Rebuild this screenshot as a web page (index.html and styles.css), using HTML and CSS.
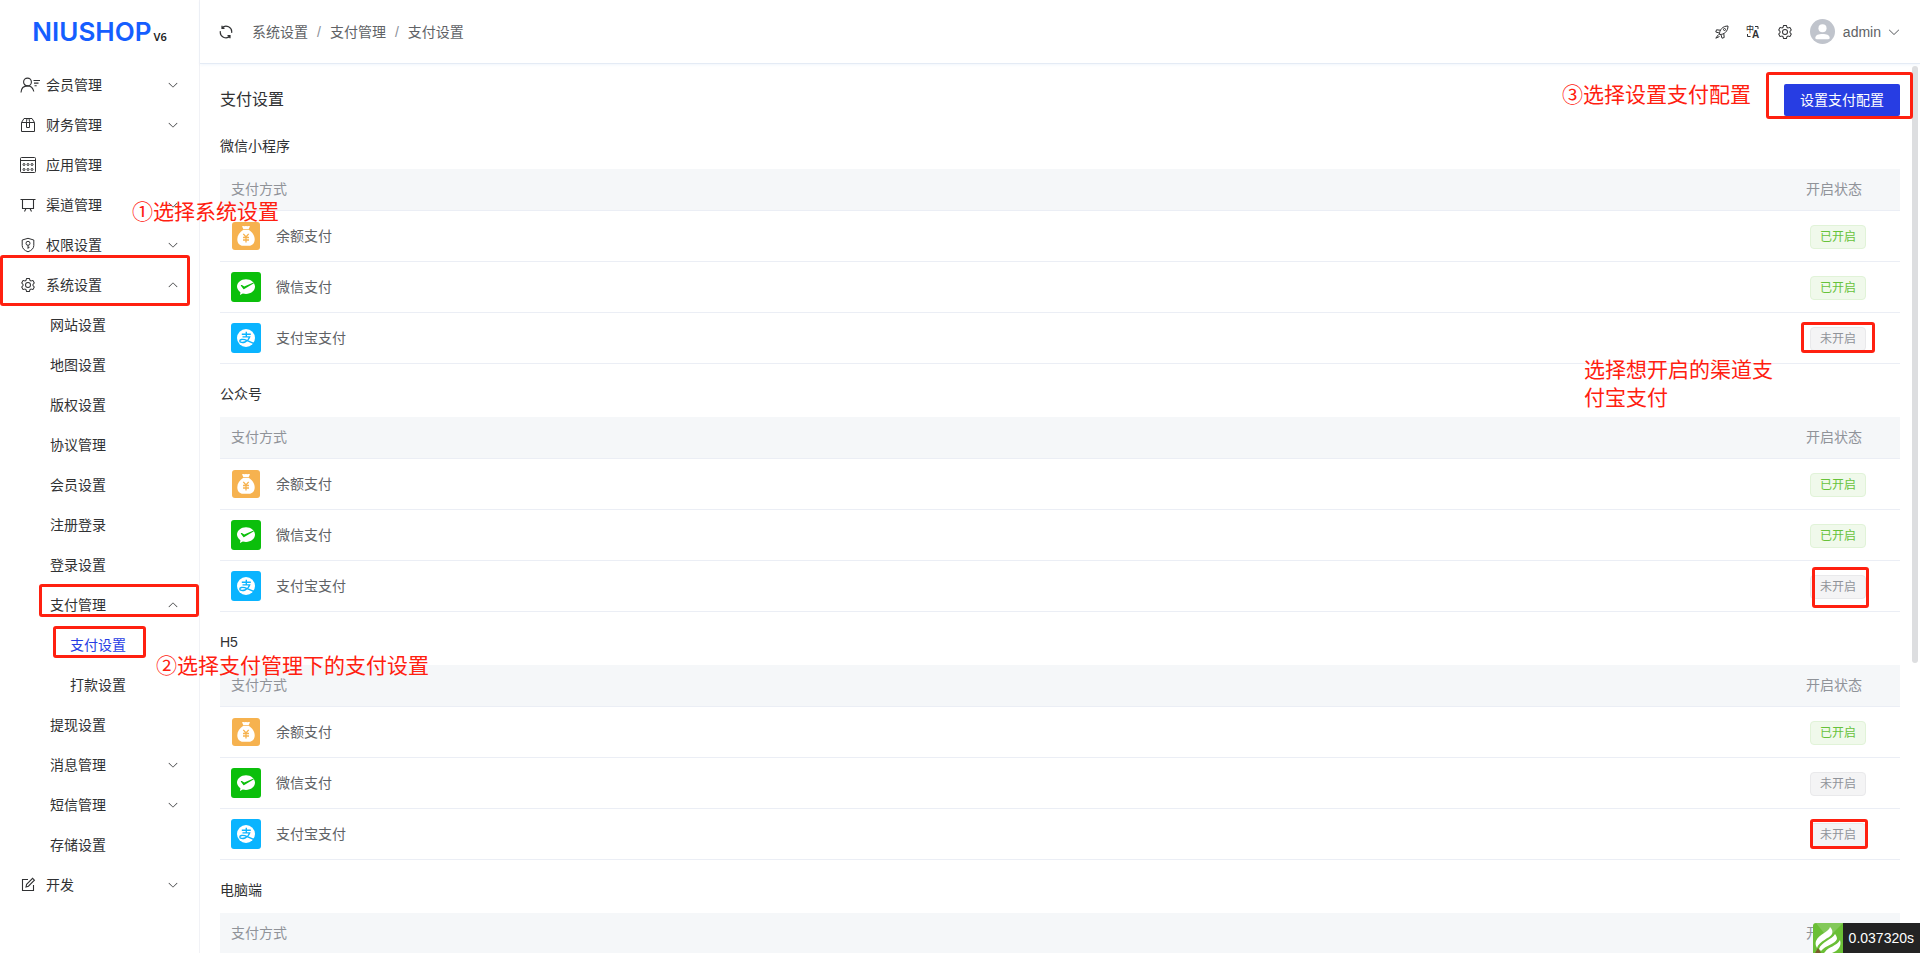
FILE: index.html
```html
<!DOCTYPE html>
<html lang="zh-CN">
<head>
    <meta charset="UTF-8">
    <meta name="viewport" content="width=device-width, initial-scale=1.0">
    <title>支付设置</title>
    <link rel="stylesheet" href="styles.css">
</head>
<body>

<!-- Shared icons -->
<svg class="sprite" aria-hidden="true">
    <symbol id="arrow" viewBox="0 0 1024 1024">
        <path fill="currentColor" d="M831.872 340.864 512 652.672 192.128 340.864a30.592 30.592 0 0 0-42.752 0 29.12 29.12 0 0 0 0 41.6L489.664 714.24a32 32 0 0 0 44.672 0l340.288-331.712a29.12 29.12 0 0 0 0-41.728 30.592 30.592 0 0 0-42.752 0z"/>
    </symbol>
    <symbol id="gear" viewBox="0 0 1024 1024">
        <path fill="currentColor" d="M600.704 64a32 32 0 0 1 30.464 22.208l35.2 109.376c14.784 7.232 28.928 15.36 42.432 24.512l112.384-24.192a32 32 0 0 1 34.432 15.36L944.32 364.8a32 32 0 0 1-4.032 37.504l-77.12 85.12a357.12 357.12 0 0 1 0 49.024l77.12 85.248a32 32 0 0 1 4.032 37.504l-88.704 153.6a32 32 0 0 1-34.432 15.296L708.8 803.904c-13.44 9.088-27.648 17.28-42.368 24.512l-35.264 109.376A32 32 0 0 1 600.704 960H423.296a32 32 0 0 1-30.464-22.208L357.696 828.48a351.616 351.616 0 0 1-42.56-24.64l-112.32 24.256a32 32 0 0 1-34.432-15.36L79.68 659.2a32 32 0 0 1 4.032-37.504l77.12-85.248a357.12 357.12 0 0 1 0-48.896l-77.12-85.248A32 32 0 0 1 79.68 364.8l88.704-153.6a32 32 0 0 1 34.432-15.296l112.32 24.256c13.568-9.152 27.776-17.408 42.56-24.64l35.2-109.312A32 32 0 0 1 423.232 64H600.64zm-23.424 64H446.72l-36.352 113.088-24.512 11.968a294.113 294.113 0 0 0-34.816 20.096l-22.656 15.36-116.224-25.088-65.28 113.152 79.68 88.192-1.92 27.136a293.12 293.12 0 0 0 0 40.192l1.92 27.136-79.808 88.192 65.344 113.152 116.224-25.024 22.656 15.296a294.113 294.113 0 0 0 34.816 20.096l24.512 11.968L446.72 896h130.688l36.48-113.152 24.448-11.904a288.282 288.282 0 0 0 34.752-20.096l22.592-15.296 116.288 25.024 65.28-113.152-79.744-88.192 1.92-27.136a293.12 293.12 0 0 0 0-40.256l-1.92-27.136 79.808-88.128-65.344-113.152-116.288 24.96-22.592-15.232a287.616 287.616 0 0 0-34.752-20.096l-24.448-11.904L577.344 128zM512 320a192 192 0 1 1 0 384 192 192 0 0 1 0-384zm0 64a128 128 0 1 0 0 256 128 128 0 0 0 0-256z"/>
    </symbol>
    <symbol id="balance" viewBox="0 0 30 30">
        <rect x="1" y="1" width="28" height="28" rx="3" fill="#f6b24f"/>
        <path fill="#fff" d="M11 5.200q1.300-.6 2.600 0 1.300-.6 2.800 0 1.400-.6 2.600 0l-1.300 2.800h-5.400zM12.300 8.800h5.400c3.600 2.300 6 5.800 6 9.400 0 4.200-2.500 6.500-5.700 6.500h-6c-3.200 0-5.700-2.300-5.700-6.500 0-3.600 2.400-7.100 6-9.400z"/>
        <path fill="none" stroke="#f6b24f" stroke-width="1.300" d="m12.300 12.800 2.700 3.200 2.700-3.200M12 16.500h6M12 19h6M15 16v5.500"/>
    </symbol>
    <symbol id="wechat" viewBox="0 0 30 30">
        <rect width="30" height="30" rx="3" fill="#0bbf0b"/>
        <path fill="#fff" d="M15 7.200c5 0 9 3.300 9 7.400s-4 7.400-9 7.400c-1.100 0-2.200-.2-3.200-.5L9 23l.4-2.800C7.300 18.800 6 16.800 6 14.600c0-4.100 4-7.400 9-7.400z"/>
        <path fill="#0bbf0b" d="M10 13c.3-.2.600-.1.900.1l2.300 1.500 9.300-4 .4.600-9.600 5.700c-.6.400-1 .3-1.300-.3L9.900 13.700c-.1-.3-.1-.5.1-.7z"/>
    </symbol>
    <symbol id="alipay" viewBox="0 0 30 30">
        <rect width="30" height="30" rx="3" fill="#0ab4ff"/>
        <circle cx="15" cy="15" r="9" fill="#fff"/>
        <path fill="none" stroke="#0ab4ff" stroke-width="1.400" d="M10.800 11.300h9M15.300 8.800v5M11.500 13.900h7.200c-.7 2.200-2.500 4.200-4.700 5.100-2.400 1-5.200.5-5.200-1.100 0-1.400 2.600-2 5-1.200 3 1 5.500 2.500 9.200 3.800"/>
    </symbol>
</svg>

<aside class="sidebar">
    <div class="logo"><span class="logo-name">NIUSHOP</span><span class="logo-version">V6</span></div>
    <nav>
        <ul class="menu">
            <li>
                <a href="#">
                    <svg class="menu-icon wide" viewBox="0 0 20 16"><g fill="none" stroke="currentColor" stroke-width="1.100"><circle cx="7.500" cy="5" r="3.900"/><path d="M1 15.500c.2-3.600 2.400-6.600 6.500-6.600 3.300 0 5.600 2.400 6.300 5.600M13.500 3.500H20M14 6.100h4.500M14.500 8.700h2.200"/></g></svg>
                    <span>会员管理</span>
                    <svg class="arrow"><use href="#arrow"/></svg>
                </a>
            </li>
            <li>
                <a href="#">
                    <svg class="menu-icon" viewBox="0 0 16 16"><g fill="none" stroke="currentColor"><path d="M1.500 5.500v9h13v-9zM1.500 5.500l2.500-4h8l2.500 4"/><path d="M6.500 10.500v-6l.5-3h2l.5 3v6z"/></g></svg>
                    <span>财务管理</span>
                    <svg class="arrow"><use href="#arrow"/></svg>
                </a>
            </li>
            <li>
                <a href="#">
                    <svg class="menu-icon" viewBox="0 0 16 16"><g fill="none" stroke="currentColor"><rect x=".5" y=".5" width="15" height="15" rx="1"/><path d="M.5 3.500h15"/><circle cx="4" cy="7.500" r="1"/><circle cx="8" cy="7.500" r="1"/><circle cx="12" cy="7.500" r="1"/><circle cx="4" cy="12.500" r="1"/><circle cx="8" cy="12.500" r="1"/><circle cx="12" cy="12.500" r="1"/></g></svg>
                    <span>应用管理</span>
                </a>
            </li>
            <li>
                <a href="#">
                    <svg class="menu-icon" viewBox="0 0 16 16"><path fill="none" stroke="currentColor" stroke-width="1.100" d="M.5 2.500h15M2.500 2.500v9h11v-9M6 11.500l-1.500 3M10 11.500l1.500 3"/></svg>
                    <span>渠道管理</span>
                    <svg class="arrow"><use href="#arrow"/></svg>
                </a>
            </li>
            <li>
                <a href="#">
                    <svg class="menu-icon" viewBox="0 0 16 16"><g fill="none" stroke="currentColor"><path d="M8 1.300 13.800 3v5.500c0 3-2.300 5-5.800 6.300-3.500-1.300-5.800-3.300-5.800-6.300V3z"/><circle cx="8" cy="6.300" r="2"/><path d="M8 8.300v3.500M8 10.300h1.500"/></g></svg>
                    <span>权限设置</span>
                    <svg class="arrow"><use href="#arrow"/></svg>
                </a>
            </li>
            <li>
                <a href="#">
                    <svg class="menu-icon"><use href="#gear"/></svg>
                    <span>系统设置</span>
                    <svg class="arrow up"><use href="#arrow"/></svg>
                </a>
                <ul class="submenu">
                    <li><a href="#">网站设置</a></li>
                    <li><a href="#">地图设置</a></li>
                    <li><a href="#">版权设置</a></li>
                    <li><a href="#">协议管理</a></li>
                    <li><a href="#">会员设置</a></li>
                    <li><a href="#">注册登录</a></li>
                    <li><a href="#">登录设置</a></li>
                    <li>
                        <a href="#">支付管理<svg class="arrow up"><use href="#arrow"/></svg></a>
                        <ul class="submenu-inner">
                            <li><a href="#" class="active">支付设置</a></li>
                            <li><a href="#">打款设置</a></li>
                        </ul>
                    </li>
                    <li><a href="#">提现设置</a></li>
                    <li><a href="#">消息管理<svg class="arrow"><use href="#arrow"/></svg></a></li>
                    <li><a href="#">短信管理<svg class="arrow"><use href="#arrow"/></svg></a></li>
                    <li><a href="#">存储设置</a></li>
                </ul>
            </li>
            <li>
                <a href="#">
                    <svg class="menu-icon" viewBox="0 0 16 16"><g fill="none" stroke="currentColor" stroke-width="1.100"><path d="M8 2.500H2.500v11h11V8"/><path d="m6 10 .6-2.600 6-6 1.800 1.800-6 6z"/></g></svg>
                    <span>开发</span>
                    <svg class="arrow"><use href="#arrow"/></svg>
                </a>
            </li>
        </ul>
    </nav>
</aside>

<div class="page">
    <header class="header">
        <button class="icon-btn refresh" aria-label="刷新">
            <svg viewBox="0 0 14 14"><path fill="none" stroke="currentColor" stroke-width="1.200" d="M3 3A5.600 5.600 0 0 1 12.600 7.800M11 11A5.600 5.600 0 0 1 1.400 6.200M3 .8v2.500h2.500M11 13.200v-2.500H8.500"/></svg>
        </button>
        <nav class="breadcrumb">
            <a href="#">系统设置</a><span>/</span><a href="#">支付管理</a><span>/</span><a href="#">支付设置</a>
        </nav>
        <div class="header-right">
            <button class="icon-btn" aria-label="首页">
                <svg viewBox="0 0 14 14"><g fill="none" stroke="currentColor"><path d="M4.500 9.500C4.300 5 7.500 1 13 1c0 5.500-4 8.700-8.500 8.500zM5.200 5.200 1.500 4.800.8 7l3.400 1M8.800 8.800l.4 3.700-2.200.7-1-3.400M3.500 9.500.8 13.200l3.700-1.700"/><circle cx="9.500" cy="4.500" r="1"/></g></svg>
            </button>
            <button class="icon-btn" aria-label="语言">
                <svg viewBox="0 0 14 14"><g fill="currentColor"><text x="0" y="7" class="lang-zh">中</text><text x="6" y="13" class="lang-en">A</text></g><path fill="none" stroke="currentColor" d="M9 1.500h3v2.500M1.500 9v2.500h3"/></svg>
            </button>
            <button class="icon-btn" aria-label="设置">
                <svg class="gear"><use href="#gear"/></svg>
            </button>
            <button class="user">
                <svg class="avatar" viewBox="0 0 26 26"><circle cx="13" cy="13" r="13" fill="#c0c4cc"/><circle cx="13" cy="9.700" r="4.200" fill="#fff"/><path fill="#fff" d="M5.500 19.500c.4-3 3.300-4 7.500-4s7.100 1 7.500 4c0 1-.5 1.500-1.500 1.500H7c-1 0-1.500-.5-1.500-1.500z"/></svg>
                <span>admin</span>
                <svg class="user-arrow"><use href="#arrow"/></svg>
            </button>
        </div>
    </header>

    <main class="content">
        <div class="title-row">
            <h1>支付设置</h1>
            <button class="btn">设置支付配置</button>
        </div>

        <h2>微信小程序</h2>
        <table class="pay-table">
            <thead>
                <tr><th>支付方式</th><th class="status">开启状态</th></tr>
            </thead>
            <tbody>
                <tr><td><div class="pay"><svg><use href="#balance"/></svg>余额支付</div></td><td class="status"><span class="tag on">已开启</span></td></tr>
                <tr><td><div class="pay"><svg><use href="#wechat"/></svg>微信支付</div></td><td class="status"><span class="tag on">已开启</span></td></tr>
                <tr><td><div class="pay"><svg><use href="#alipay"/></svg>支付宝支付</div></td><td class="status"><span class="tag">未开启</span></td></tr>
            </tbody>
        </table>

        <h2>公众号</h2>
        <table class="pay-table">
            <thead>
                <tr><th>支付方式</th><th class="status">开启状态</th></tr>
            </thead>
            <tbody>
                <tr><td><div class="pay"><svg><use href="#balance"/></svg>余额支付</div></td><td class="status"><span class="tag on">已开启</span></td></tr>
                <tr><td><div class="pay"><svg><use href="#wechat"/></svg>微信支付</div></td><td class="status"><span class="tag on">已开启</span></td></tr>
                <tr><td><div class="pay"><svg><use href="#alipay"/></svg>支付宝支付</div></td><td class="status"><span class="tag">未开启</span></td></tr>
            </tbody>
        </table>

        <h2>H5</h2>
        <table class="pay-table">
            <thead>
                <tr><th>支付方式</th><th class="status">开启状态</th></tr>
            </thead>
            <tbody>
                <tr><td><div class="pay"><svg><use href="#balance"/></svg>余额支付</div></td><td class="status"><span class="tag on">已开启</span></td></tr>
                <tr><td><div class="pay"><svg><use href="#wechat"/></svg>微信支付</div></td><td class="status"><span class="tag">未开启</span></td></tr>
                <tr><td><div class="pay"><svg><use href="#alipay"/></svg>支付宝支付</div></td><td class="status"><span class="tag">未开启</span></td></tr>
            </tbody>
        </table>

        <h2>电脑端</h2>
        <table class="pay-table">
            <thead>
                <tr><th>支付方式</th><th class="status">开启状态</th></tr>
            </thead>
        </table>
    </main>
    <div class="scrollbar"></div>
</div>

<!-- Page trace -->
<div class="trace">
    <svg viewBox="0 0 30 30"><path fill="#6abf36" d="M3 0h27v30H0V3q0-3 3-3z"/><path fill="#83c95a" d="M3 0h27L15 15z"/><path fill="#fff" d="M17 4c-1 5-11 7-14 14-1 3 0 5 1 7C6 18 17 15 19 11c1-3 0-5-2-7zM22 11c-2 5-14 8-16 15l2 2c5-6 14-7 16-12 0-2-1-4-2-5zM27 17c-3 6-12 7-15 12l-1 1h8c6-2 10-7 8-13z"/><path fill="#7a5a2a" d="m5 25-3 5h6z"/></svg>
    <span>0.037320s</span>
</div>

<!-- Guide marks over the page -->
<div class="mark mark-system"></div>
<div class="mark mark-pay"></div>
<div class="mark mark-pay-setting"></div>
<div class="mark mark-config"></div>
<div class="mark mark-weapp"></div>
<div class="mark mark-wechat"></div>
<div class="mark mark-h5"></div>
<p class="note note-1">①选择系统设置</p>
<p class="note note-2">②选择支付管理下的支付设置</p>
<p class="note note-3">③选择设置支付配置</p>
<p class="note note-4">选择想开启的渠道支<br>付宝支付</p>

</body>
</html>
```
FILE: styles.css
```css
* {
    margin: 0;
    padding: 0;
    box-sizing: border-box;
}

body {
    position: relative;
    display: flex;
    height: 100vh;
    overflow: hidden;
    font-family: "Liberation Sans", "Noto Sans CJK SC", sans-serif;
    font-size: 14px;
    line-height: 20px;
    color: #303133;
    background: #fff;
}

a {
    color: inherit;
    text-decoration: none;
}

ul {
    list-style: none;
}

button {
    border: none;
    background: none;
    font: inherit;
    color: inherit;
    cursor: pointer;
}

svg {
    display: block;
    flex-shrink: 0;
}

.sprite {
    display: none;
}

/* Sidebar */
.sidebar {
    flex: none;
    width: 200px;
    border-right: 1px solid #f1f2f6;
}

.logo {
    display: flex;
    align-items: baseline;
    justify-content: center;
    gap: 2px;
    height: 65px;
    padding-top: 16px;
    line-height: 32px;
    font-family: Inter, sans-serif;
}

.logo-name {
    font-size: 26px;
    font-weight: 600;
    color: #155eff;
}

.logo-version {
    font-family: "Noto Sans", sans-serif;
    font-size: 11px;
    font-weight: 600;
    color: #222;
}

.menu a {
    display: flex;
    align-items: center;
    height: 40px;
    padding: 0 20px;
}

.menu-icon {
    width: 16px;
    height: 16px;
    margin-right: 10px;
}

.menu-icon.wide {
    width: 20px;
    margin-right: 6px;
}

.menu .submenu a {
    padding-left: 50px;
}

.menu .submenu-inner a {
    padding-left: 70px;
}

.menu a.active {
    color: #273de3;
}

.arrow {
    width: 12px;
    height: 12px;
    margin-left: auto;
}

.arrow.up {
    transform: rotate(180deg);
}

/* Header */
.page {
    position: relative;
    display: flex;
    flex: 1;
    flex-direction: column;
    min-width: 0;
}

.header {
    display: flex;
    align-items: center;
    flex: none;
    height: 64px;
    padding: 0 19px;
    border-bottom: 1px solid #e4ebf5;
    box-shadow: 0 1px 3px rgba(0, 100, 200, 0.06);
}

.icon-btn svg {
    width: 14px;
    height: 14px;
}

.icon-btn svg.gear {
    width: 16px;
    height: 16px;
}

.breadcrumb {
    display: flex;
    margin-left: 19px;
    color: #606266;
}

.breadcrumb span {
    margin: 0 9px;
    color: #8c9099;
}

.header-right {
    display: flex;
    align-items: center;
    gap: 17px;
    margin-left: auto;
}

.lang-zh {
    font-size: 8px;
    font-weight: 500;
}

.lang-en {
    font-size: 10px;
    font-weight: 700;
}

.user {
    display: flex;
    align-items: center;
    gap: 8px;
    color: #606266;
}

.avatar {
    width: 25px;
    height: 25px;
}

.user-arrow {
    width: 14px;
    height: 14px;
    margin-left: -2px;
}

/* Content */
.content {
    flex: 1;
    min-height: 0;
    padding: 20px;
    overflow: hidden;
}

.title-row {
    display: flex;
    align-items: center;
    justify-content: space-between;
}

h1 {
    font-size: 16px;
    font-weight: 400;
}

h2 {
    margin: 20px 0 13px;
    font-size: 14px;
    font-weight: 400;
}

.btn {
    height: 32px;
    padding: 0 16px;
    border-radius: 2px;
    background: #273de3;
    color: #fff;
}

.pay-table {
    width: 100%;
    border-spacing: 0;
    table-layout: fixed;
    color: #606266;
}

.pay-table th {
    height: 42px;
    padding: 0 11px 2px;
    border-bottom: 1px solid #ebeef5;
    background: #f5f7f9;
    font-weight: 400;
    text-align: left;
    color: #909399;
}

.pay-table td {
    height: 51px;
    padding: 0 11px;
    border-bottom: 1px solid #ebeef5;
}

.pay-table .status {
    width: 105px;
}

.pay-table td.status {
    padding-top: 2px;
    padding-left: 15px;
}

.pay {
    display: flex;
    align-items: center;
    gap: 15px;
}

.pay svg {
    width: 30px;
    height: 30px;
}

.tag {
    display: block;
    width: 56px;
    border: 1px solid #e9e9eb;
    border-radius: 4px;
    background: #f4f4f5;
    font-size: 12px;
    line-height: 22px;
    text-align: center;
    color: #909399;
}

.tag.on {
    border-color: #e1f3d8;
    background: #f0f9eb;
    color: #67c23a;
}

.scrollbar {
    position: absolute;
    top: 66px;
    right: 2px;
    width: 6px;
    height: 597px;
    border-radius: 3px;
    background: #dddee0;
}

/* Page trace */
.trace {
    position: absolute;
    right: 0;
    bottom: 0;
    display: flex;
    height: 30px;
    line-height: 30px;
    color: #fff;
}

.trace svg {
    width: 30px;
    height: 30px;
}

.trace span {
    padding: 0 6px;
    background: #232323;
}

/* Guide marks */
.mark {
    position: absolute;
    border: 3px solid #ff2010;
    border-radius: 3px;
}

.mark-system {
    top: 255px;
    left: 0;
    width: 190px;
    height: 51px;
}

.mark-pay {
    top: 584px;
    left: 39px;
    width: 160px;
    height: 33px;
}

.mark-pay-setting {
    top: 626px;
    left: 53px;
    width: 93px;
    height: 32px;
}

.mark-config {
    top: 72px;
    right: 7px;
    width: 147px;
    height: 47px;
}

.mark-weapp {
    top: 322px;
    right: 45px;
    width: 74px;
    height: 31px;
}

.mark-wechat {
    top: 567px;
    right: 51px;
    width: 57px;
    height: 41px;
}

.mark-h5 {
    top: 819px;
    right: 52px;
    width: 58px;
    height: 30px;
}

.note {
    position: absolute;
    font-size: 21px;
    line-height: 28px;
    white-space: nowrap;
    color: #ff2010;
}

.note-1 {
    top: 198px;
    left: 132px;
}

.note-2 {
    top: 652px;
    left: 156px;
}

.note-3 {
    top: 81px;
    right: 169px;
}

.note-4 {
    top: 356px;
    right: 147px;
}
```
